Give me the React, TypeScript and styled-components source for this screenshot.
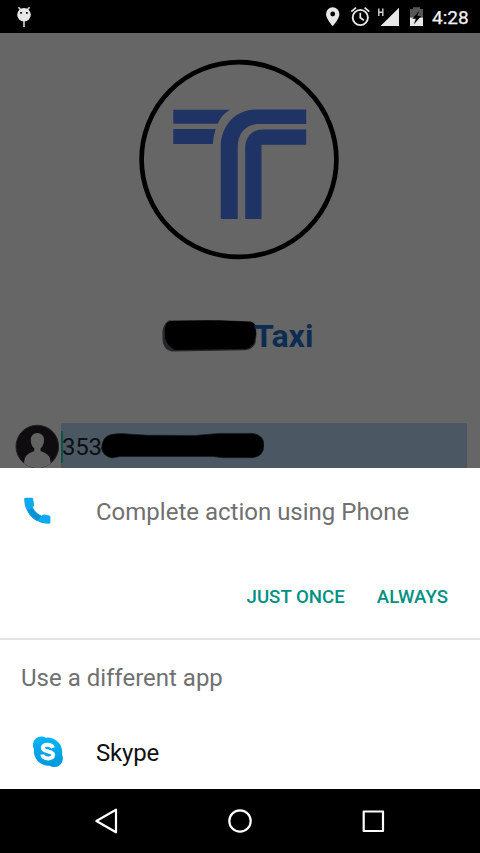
import React from "react";
import styled, { createGlobalStyle } from "styled-components";

const GlobalStyle = createGlobalStyle`
  * { box-sizing: border-box; }
  body { margin: 0; background: #000; font-family: Roboto, "Noto Sans", sans-serif; }
  svg { display: block; flex: none; }
`;

const Screen = styled.div`
  width: 480px;
  height: 853px;
  display: flex;
  flex-direction: column;
  overflow: hidden;
`;

const StatusBar = styled.header`
  height: 33px;
  flex: none;
  display: flex;
  align-items: center;
  justify-content: space-between;
  padding: 0 11px 0 16px;
  background: #000;
  color: #f0f0f0;
`;

const StatusIcons = styled.div`
  display: flex;
  align-items: center;
`;

const Clock = styled.time`
  width: 37px;
  margin-left: 9px;
  font-size: 19px;
  font-weight: 400;
  -webkit-text-stroke: 0.25px #f0f0f0;
  line-height: 33px;
  padding-top: 2px;
  white-space: nowrap;
`;

const DimmedPage = styled.main`
  height: 435px;
  flex: none;
  display: flex;
  flex-direction: column;
  background: #666;
`;

const Logo = styled.svg`
  margin: 26px 0 0 138px;
`;

const Brand = styled.div`
  height: 40px;
  margin: 56px 0 0 160px;
  display: flex;
  align-items: center;
`;

const BrandName = styled.h1`
  margin: 0 0 0 -4px;
  font-size: 32px;
  line-height: 40px;
  font-weight: 700;
  color: #0c2c52;
`;

const PhoneRow = styled.div`
  height: 45px;
  margin: 67px 13px 0 15px;
  display: flex;
`;

const PhoneField = styled.div`
  flex: 1;
  margin-left: 2px;
  display: flex;
  align-items: center;
  background: #4b5864;
  font-size: 24px;
  color: #0d0f12;
`;

const Caret = styled.span`
  width: 2px;
  height: 32px;
  margin-top: 2px;
  background: #07544a;
`;

const Digits = styled.span`
  width: 37px;
  padding-top: 3px;
  margin-left: -1px;
  letter-spacing: -0.2px;
`;

const Sheet = styled.section`
  height: 321px;
  flex: none;
  display: flex;
  flex-direction: column;
  background: #fff;
`;

const AppRow = styled.div<{ $inset: number; $height: number }>`
  height: ${(p) => p.$height}px;
  padding-left: ${(p) => p.$inset}px;
  display: flex;
  align-items: center;
`;

const Label = styled.span<{ $muted?: boolean; $gap: number }>`
  margin-left: ${(p) => p.$gap}px;
  padding-top: 2px;
  font-size: 24px;
  letter-spacing: ${(p) => (p.$muted ? "0" : "-0.2px")};
  line-height: 32px;
  white-space: nowrap;
  color: ${(p) => (p.$muted ? "#707070" : "#111")};
`;

const Actions = styled.div`
  height: 84px;
  padding: 2px 32px 0 0;
  display: flex;
  align-items: center;
  justify-content: flex-end;
  gap: 32px;
`;

const ActionButton = styled.button`
  border: 0;
  padding: 0;
  background: none;
  font: 500 18.67px/28px Roboto, sans-serif;
  color: #009182;
`;

const Subheading = styled.h2`
  height: 77px;
  margin: 0;
  padding-left: 21px;
  border-top: 2px solid #e3e3e3;
  font-size: 24px;
  font-weight: 400;
  line-height: 77px;
  color: #707070;
`;

const NavBar = styled.nav`
  flex: 1;
  display: flex;
  justify-content: center;
  gap: 93px;
  align-items: center;
  background: #000;
`;

const NavIcon = ({ children }: { children: React.ReactNode }) => (
  <svg width="40" height="40" viewBox="0 0 40 40" fill="none" stroke="#fff" strokeWidth="2.2" strokeLinejoin="round">
    {children}
  </svg>
);

export default function App() {
  return (
    <>
      <GlobalStyle />
      <Screen>
        <StatusBar>
          <svg width="16" height="33" viewBox="16 0 16 33" fill="#e8e8e8">
            <circle cx="24" cy="14.8" r="6.8" />
            <path d="M18.5 7.300l2.500 3M29.500 7.300L27 10.300M24 20v7" stroke="#e8e8e8" strokeWidth="1.5" />
            <path d="M20.200 12h1.700v1.700h-1.700zM26 12h1.700v1.700H26z" fill="#000" />
          </svg>
          <StatusIcons>
            <svg width="99" height="33" viewBox="324 0 99 33" fill="#e8e8e8">
              <path fillRule="evenodd" d="M332.700 7.300a6.700 6.700 0 0 0-6.700 6.700c0 4.800 6.700 12.200 6.700 12.200s6.700-7.400 6.700-12.200a6.700 6.700 0 0 0-6.700-6.700zm0 4.300a2.400 2.400 0 1 1 0 4.800 2.400 2.400 0 0 1 0-4.800z" />
              <circle cx="360.300" cy="17.500" r="7.600" fill="none" stroke="#e8e8e8" strokeWidth="1.900" />
              <path d="M351.300 11.700l4.700-4M369.300 11.700l-4.700-4M360.300 12.800v5l3.600 2.400" fill="none" stroke="#e8e8e8" strokeWidth="1.700" />
              <path d="M378.800 8.500v7.500M382.800 8.500v7.500M378.800 12.200h4" fill="none" stroke="#d5d5d5" strokeWidth="1.400" />
              <path d="M399 7.700V26h-18.500z" />
              <path d="M410 9h3V7.300h7V9h3v8.500h-13z" fill="#565656" />
              <path d="M410 17.500h13V26h-13z" />
              <path d="M419.200 11l-6.800 7.800h3.400l-2 5.700 7.400-8.500h-3.700z" fill="#000" />
            </svg>
            <Clock>4:28</Clock>
          </StatusIcons>
        </StatusBar>

        <DimmedPage>
          <Logo width="202" height="201" viewBox="138 59 202 201">
            <circle cx="239" cy="159.500" r="97.400" fill="none" stroke="#000" strokeWidth="4.700" />
            <g fill="#203365">
              <path d="M173.300 109.700H230Q221.500 114.500 217.700 123.800H173.300z" />
              <path d="M173.300 129H215.700Q213.200 136 212.800 144H173.300z" />
              <path d="M306.200 109.500H256C235 109.500 220.800 126 220.800 147V219H237.700V147C237.700 133 246 124 259 124H306.200z" />
              <path d="M306.200 129.500H263C252 129.500 245.200 137 245.200 148V219H261.500V144.700H306.200z" />
            </g>
          </Logo>
          <Brand>
            <svg width="98" height="34" viewBox="160 319 98 34">
              <path d="M170 320.500L208 320l42 1.300q5 1 6 6l.5 7-1 9q-3 6-10 7l-74 1.300q-8.500-2-9-12v-8q1-9 7.500-11.600z" fill="#252627" />
              <path d="M171 321L220 320.500l31 1.500q4 1 4.500 6l.5 6-2 9q-3 5-8 6l-71 1q-8-4-10-12v-10q1-6 6-7z" fill="#000" />
            </svg>
            <BrandName>Taxi</BrandName>
          </Brand>
          <PhoneRow>
            <svg width="44" height="45" viewBox="15 423 44 45">
              <circle cx="37.300" cy="446.500" r="21.300" fill="#0e0c0e" stroke="#242324" strokeWidth="1" />
              <path d="M37.300 433.500c-4.200 0-6.500 3-6.100 7 .3 4 1.500 6.500 3.500 8v2.500c-2.500 2-8.800 2.200-9.800 8.800l-.4 3.500a21 21 0 0 0 25.800 0l-.4-3.500c-1-6.600-7.300-6.800-9.800-8.800v-2.500c2-1.500 3.200-4 3.500-8 .4-4-2-7-6.300-7z" fill="#626262" stroke="#777" strokeWidth=".6" />
            </svg>
            <PhoneField>
              <Caret />
              <Digits>353</Digits>
              <svg width="165" height="45" viewBox="99 423 165 45">
                <path d="M111 434.500q9-1.700 20-.3l16 1 48 .2 24-2h34q11 2 11 12-.5 11-11 12.300h-30l-10-1.200H120l-8 1.500q-9-2-10.500-9.500.5-12 9.500-14z" fill="#000" stroke="#151a1e" strokeWidth=".7" />
              </svg>
            </PhoneField>
          </PhoneRow>
        </DimmedPage>

        <Sheet>
          <AppRow $height={86} $inset={21}>
            <svg width="32" height="32" viewBox="21 495 32 32">
              <path d="M25.500 497.700h6.200q1.300 0 1.400 1.300l1 5.500q.2 1-.5 1.700l-2.600 2.800q3.200 5.800 8.700 8.700l2.800-2.600q.7-.7 1.700-.5l5 1q1.200.2 1.200 1.400v5.500q0 1.300-1.300 1.300C35 523.800 24.200 513 24.200 499q0-1.300 1.300-1.300z" fill="#10a9ef" />
              <path d="M32.500 507l-4.700 4q3 6.500 9.200 10l5-5q-6.500-2.800-9.500-9z" fill="#0a92d8" />
            </svg>
            <Label $muted $gap={43}>Complete action using Phone</Label>
          </AppRow>
          <Actions>
            <ActionButton>JUST ONCE</ActionButton>
            <ActionButton>ALWAYS</ActionButton>
          </Actions>
          <Subheading>Use a different app</Subheading>
          <AppRow $height={74} $inset={32}>
            <svg width="32" height="32" viewBox="32 736 32 32">
              <defs>
                <linearGradient id="skype" x1="0" y1="0" x2="0" y2="1">
                  <stop stopColor="#05b5f5" />
                  <stop offset="1" stopColor="#0298dc" />
                </linearGradient>
              </defs>
              <path d="M41.500 736.500q2.500 0 4.500 1.200A14.500 14.500 0 0 1 62 754.300C65 761 60 767.500 54 767q-2.500 0-4.500-1.300A14.500 14.500 0 0 1 34 749.500C31 743 35 736.700 41.500 736.500z" fill="url(#skype)" />
              <path d="M53 747.800c-1.500-4.200-9.700-4.200-10.200-.1-.5 4.600 10.500 2.700 10.400 7.300-.2 4.800-10.200 4.400-11-.5" fill="none" stroke="#fff" strokeWidth="4" />
            </svg>
            <Label $gap={32}>Skype</Label>
          </AppRow>
        </Sheet>

        <NavBar>
          <NavIcon><path d="M9.400 20L29 8.700V31.300z" /></NavIcon>
          <NavIcon><circle cx="20" cy="20" r="10.700" /></NavIcon>
          <NavIcon><rect x="10.700" y="10.500" width="19.300" height="19.500" /></NavIcon>
        </NavBar>
      </Screen>
    </>
  );
}
